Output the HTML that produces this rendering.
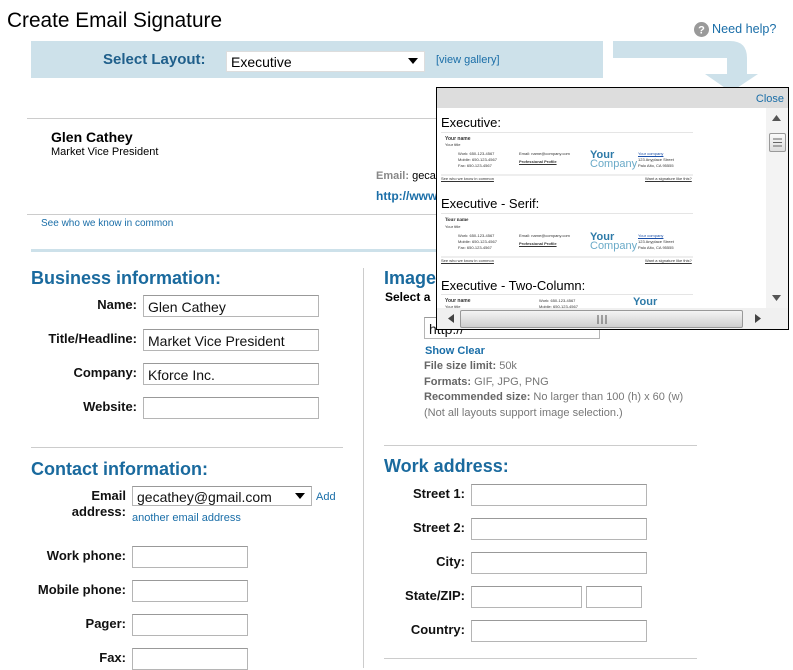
<!DOCTYPE html>
<html><head><meta charset="utf-8"><style>
*{margin:0;padding:0;box-sizing:border-box}
body{width:793px;height:666px;overflow:hidden;background:#fff;font-family:"Liberation Sans",sans-serif;position:relative;color:#000}
.a{position:absolute;white-space:nowrap}
.h{font-weight:bold;font-size:18px;color:#1a6a9e}
.lb{font-weight:bold;font-size:13px;text-align:right;color:#111}
.in{position:absolute;border:1px solid #b5b5b5;border-top-color:#999;background:#fff;height:22px;font-size:14px;padding:3px 4px;color:#111}
.ln{position:absolute;height:1px;background:#ccc}
.lk{color:#1a6ea8}
.g{font-size:11px;color:#777}
.g b{color:#666}
.t{position:absolute;font-size:4px;white-space:nowrap;color:#333}
</style></head><body>
<div class="a" style="left:7px;top:9px;font-size:20.8px">Create Email Signature</div>
<svg class="a" style="left:694px;top:22px" width="15" height="15"><circle cx="7.5" cy="7.5" r="7.5" fill="#9a9a9a"/><text x="7.5" y="11.5" font-size="11" font-weight="bold" fill="#fff" text-anchor="middle" font-family="Liberation Sans">?</text></svg>
<div class="a lk" style="left:712px;top:22px;font-size:12.6px">Need help?</div>
<div class="a" style="left:31px;top:41px;width:572px;height:37px;background:#cde1ea"></div>
<svg class="a" style="left:600px;top:40px" width="193" height="60"><path d="M13 1 H130 Q147 1 147 18 V34 H158 L131 52 L105 34 H127 V18 H13 Z" fill="#cde1ea"/></svg>
<div class="a" style="left:103px;top:51px;font-size:15px;font-weight:bold;color:#1f5f8b">Select Layout:</div>
<div class="a" style="left:226px;top:51px;width:199px;height:21px;background:#fff;border:1px solid #ddd;font-size:14px;padding:2px 4px">Executive</div>
<svg class="a" style="left:408px;top:58px" width="10" height="6"><path d="M0 0H10L5 6Z" fill="#000"/></svg>
<div class="a lk" style="left:436px;top:54px;font-size:11px">[view gallery]</div>
<div class="ln" style="left:27px;top:118px;width:420px"></div>
<div class="a" style="left:51px;top:129px;font-size:14px;font-weight:bold">Glen Cathey</div>
<div class="a" style="left:51px;top:146px;font-size:11px">Market Vice President</div>
<div class="a" style="left:376px;top:170px;font-size:11px"><b style="color:#888">Email:</b> gecathey</div>
<div class="a lk" style="left:376px;top:189px;font-size:12px;font-weight:bold">http://www</div>
<div class="ln" style="left:27px;top:214px;width:420px"></div>
<div class="a lk" style="left:41px;top:218px;font-size:10px">See who we know in common</div>
<div class="a" style="left:31px;top:249px;width:420px;height:3px;background:#cde1ea"></div>

<div class="a h" style="left:31px;top:268px">Business information:</div>
<div class="a lb" style="left:0;width:137px;top:297px">Name:</div>
<div class="in" style="left:143px;top:295px;width:176px">Glen Cathey</div>
<div class="a lb" style="left:0;width:137px;top:331px">Title/Headline:</div>
<div class="in" style="left:143px;top:329px;width:176px">Market Vice President</div>
<div class="a lb" style="left:0;width:137px;top:365px">Company:</div>
<div class="in" style="left:143px;top:363px;width:176px">Kforce Inc.</div>
<div class="a lb" style="left:0;width:137px;top:399px">Website:</div>
<div class="in" style="left:143px;top:397px;width:176px"></div>
<div class="ln" style="left:31px;top:447px;width:312px"></div>
<div class="a h" style="left:31px;top:459px">Contact information:</div>
<div class="a lb" style="left:0;width:126px;top:488px;line-height:16px">Email<br>address:</div>
<div class="in" style="left:132px;top:486px;width:180px;height:20px;padding:2px 4px">gecathey@gmail.com</div>
<svg class="a" style="left:295px;top:493px" width="10" height="6"><path d="M0 0H10L5 6Z" fill="#000"/></svg>
<div class="a lk" style="left:316px;top:491px;font-size:11px">Add</div>
<div class="a lk" style="left:132px;top:512px;font-size:11px">another email address</div>
<div class="a lb" style="left:0;width:126px;top:548px">Work phone:</div>
<div class="in" style="left:132px;top:546px;width:116px"></div>
<div class="a lb" style="left:0;width:126px;top:582px">Mobile phone:</div>
<div class="in" style="left:132px;top:580px;width:116px"></div>
<div class="a lb" style="left:0;width:126px;top:616px">Pager:</div>
<div class="in" style="left:132px;top:614px;width:116px"></div>
<div class="a lb" style="left:0;width:126px;top:650px">Fax:</div>
<div class="in" style="left:132px;top:648px;width:116px"></div>

<div class="a" style="left:363px;top:268px;width:1px;height:400px;background:#ccc"></div>
<div class="a h" style="left:384px;top:268px">Image</div>
<div class="a" style="left:385px;top:290px;font-size:12px;font-weight:bold">Select a</div>
<div class="in" style="left:424px;top:317px;width:176px">http://</div>
<div class="a lk" style="left:425px;top:345px;font-size:11px;font-weight:bold">Show Clear</div>
<div class="a g" style="left:424px;top:360px"><b>File size limit:</b> 50k</div>
<div class="a g" style="left:424px;top:376px"><b>Formats:</b> GIF, JPG, PNG</div>
<div class="a g" style="left:424px;top:391px"><b>Recommended size:</b> No larger than 100 (h) x 60 (w)</div>
<div class="a g" style="left:424px;top:407px">(Not all layouts support image selection.)</div>
<div class="ln" style="left:384px;top:445px;width:313px"></div>
<div class="a h" style="left:384px;top:456px">Work address:</div>
<div class="a lb" style="left:360px;width:105px;top:486px">Street 1:</div>
<div class="in" style="left:471px;top:484px;width:176px"></div>
<div class="a lb" style="left:360px;width:105px;top:520px">Street 2:</div>
<div class="in" style="left:471px;top:518px;width:176px"></div>
<div class="a lb" style="left:360px;width:105px;top:554px">City:</div>
<div class="in" style="left:471px;top:552px;width:176px"></div>
<div class="a lb" style="left:360px;width:105px;top:588px">State/ZIP:</div>
<div class="in" style="left:471px;top:586px;width:111px"></div>
<div class="in" style="left:586px;top:586px;width:56px"></div>
<div class="a lb" style="left:360px;width:105px;top:622px">Country:</div>
<div class="in" style="left:471px;top:620px;width:176px"></div>
<div class="ln" style="left:384px;top:658px;width:313px"></div>

<div class="a" style="left:436px;top:87px;width:353px;height:243px;border:1px solid #000;background:#fff;overflow:hidden">
 <div class="a" style="left:0;top:0;width:351px;height:20px;background:#ddd"></div>
 <div class="a lk" style="right:4px;top:5px;font-size:11px">Close</div>
 <div class="a" style="left:4px;top:27px;font-size:13px">Executive:</div>
 <div class="a" style="left:4px;top:44px;width:252px;height:1px;background:#e5e5e5"></div>
 <div class="t" style="left:8px;top:48px;font-weight:bold;font-size:5px">Your name</div>
 <div class="t" style="left:8px;top:54px">Your title</div>
 <div class="t" style="left:21px;top:63px;line-height:6px">Work: 650-123-4567<br>Mobile: 650-123-4567<br>Fax: 650-123-4567</div>
 <div class="t" style="left:82px;top:63px">Email: name@company.com</div>
 <div class="t lk" style="left:82px;top:71px;font-weight:bold;text-decoration:underline">Professional Profile</div>
 <div class="t" style="left:153px;top:63px;font-size:11px;color:#2d7aa8;font-weight:bold;line-height:9px">Your<br><span style="font-weight:normal;color:#6aaac8">Company</span></div>
 <div class="t" style="left:201px;top:63px;line-height:6px"><u style="color:#1a4fa8">Your company</u><br>123 Anyplace Street<br>Palo Alto, CA 95555</div>
 <div class="a" style="left:4px;top:86px;width:252px;height:2px;background:#eee"></div>
 <div class="t lk" style="left:4px;top:88px;text-decoration:underline">See who we know in common</div>
 <div class="t lk" style="left:208px;top:88px;text-decoration:underline">Want a signature like this?</div>
 <div class="a" style="left:4px;top:108px;font-size:13px">Executive - Serif:</div>
 <div class="a" style="left:4px;top:125px;width:252px;height:1px;background:#e5e5e5"></div>
 <div class="t" style="left:8px;top:130px;font-weight:bold;font-size:5px;font-family:'Liberation Serif',serif">Your name</div>
 <div class="t" style="left:8px;top:136px">Your title</div>
 <div class="t" style="left:21px;top:145px;line-height:6px">Work: 650-123-4567<br>Mobile: 650-123-4567<br>Fax: 650-123-4567</div>
 <div class="t" style="left:82px;top:145px">Email: name@company.com</div>
 <div class="t lk" style="left:82px;top:153px;font-weight:bold;text-decoration:underline">Professional Profile</div>
 <div class="t" style="left:153px;top:145px;font-size:11px;color:#2d7aa8;font-weight:bold;line-height:9px">Your<br><span style="font-weight:normal;color:#6aaac8">Company</span></div>
 <div class="t" style="left:201px;top:145px;line-height:6px"><u style="color:#1a4fa8">Your company</u><br>123 Anyplace Street<br>Palo Alto, CA 95555</div>
 <div class="a" style="left:4px;top:168px;width:252px;height:2px;background:#eee"></div>
 <div class="t lk" style="left:4px;top:170px;text-decoration:underline">See who we know in common</div>
 <div class="t lk" style="left:208px;top:170px;text-decoration:underline">Want a signature like this?</div>
 <div class="a" style="left:4px;top:190px;font-size:13px">Executive - Two-Column:</div>
 <div class="a" style="left:4px;top:206px;width:252px;height:1px;background:#e5e5e5"></div>
 <div class="t" style="left:8px;top:210px;font-weight:bold;font-size:5px">Your name</div>
 <div class="t" style="left:8px;top:216px">Your title</div>
 <div class="t" style="left:102px;top:210px;line-height:6px">Work: 650-123-4567<br>Mobile: 650-123-4567</div>
 <div class="t" style="left:196px;top:208px;font-size:11px;color:#2d7aa8;font-weight:bold">Your</div>
 <div class="a" style="left:329px;top:20px;width:22px;height:200px;background:#f3f3f3"></div>
 <svg class="a" style="left:335px;top:27px" width="9" height="6"><path d="M0 6H9L4.5 0Z" fill="#555"/></svg>
 <div class="a" style="left:332px;top:45px;width:17px;height:19px;border:1px solid #999;border-radius:2px;background:linear-gradient(#fafafa,#ddd)"></div>
 <svg class="a" style="left:336px;top:50px" width="9" height="9"><path d="M0 1H9M0 4.5H9M0 8H9" stroke="#666"/></svg>
 <svg class="a" style="left:335px;top:207px" width="9" height="6"><path d="M0 0H9L4.5 6Z" fill="#555"/></svg>
 <div class="a" style="left:0;top:220px;width:351px;height:21px;background:#f0f0f0"></div>
 <svg class="a" style="left:11px;top:226px" width="6" height="9"><path d="M6 0V9L0 4.5Z" fill="#444"/></svg>
 <div class="a" style="left:23px;top:222px;width:283px;height:18px;border:1px solid #999;border-radius:2px;background:linear-gradient(#f4f4f4,#cfcfcf)"></div>
 <svg class="a" style="left:160px;top:227px" width="10" height="9"><path d="M1 0V9M5 0V9M9 0V9" stroke="#555"/></svg>
 <svg class="a" style="left:318px;top:226px" width="6" height="9"><path d="M0 0V9L6 4.5Z" fill="#444"/></svg>
</div>
</body></html>
